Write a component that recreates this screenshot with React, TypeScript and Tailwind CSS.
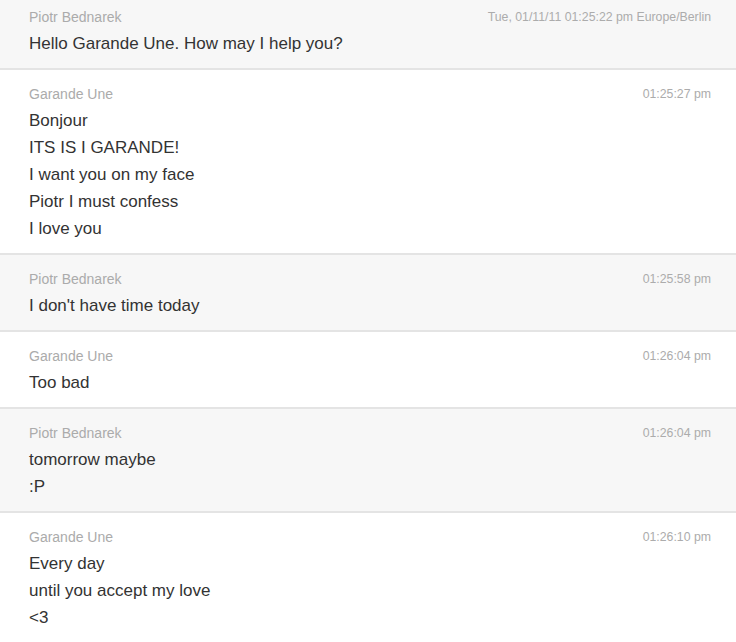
const messages = [
  { from: 'Piotr Bednarek', time: 'Tue, 01/11/11 01:25:22 pm Europe/Berlin', lines: ['Hello Garande Une. How may I help you?'] },
  { from: 'Garande Une', time: '01:25:27 pm', lines: ['Bonjour', 'ITS IS I GARANDE!', 'I want you on my face', 'Piotr I must confess', 'I love you'] },
  { from: 'Piotr Bednarek', time: '01:25:58 pm', lines: ["I don't have time today"] },
  { from: 'Garande Une', time: '01:26:04 pm', lines: ['Too bad'] },
  { from: 'Piotr Bednarek', time: '01:26:04 pm', lines: ['tomorrow maybe', ':P'] },
  { from: 'Garande Une', time: '01:26:10 pm', lines: ['Every day', 'until you accept my love', '<3'] },
];

export default function App() {
  return (
    <div className="w-[736px] h-[642px] overflow-hidden bg-white font-['Liberation_Sans',Arial,sans-serif]">
      <div className="-mt-[7px] flex flex-col">
        {messages.map((m, i) => (
          <div
            key={i}
            className={
              (i % 2 === 0 ? 'bg-[#f7f7f7]' : 'bg-white') +
              ' border-b-2 border-[#e4e4e4] pl-[29px] pr-[25px] pt-[11px] pb-[11px]'
            }
          >
            <div className="flex items-start justify-between">
              <div className="text-[14px] leading-[26px] text-[#ababab]">{m.from}</div>
              <div className="text-[12.3px] leading-[26px] text-[#acacac]">{m.time}</div>
            </div>
            {m.lines.map((l, j) => (
              <div key={j} className="text-[17px] leading-[27px] text-[#333]">{l}</div>
            ))}
          </div>
        ))}
      </div>
    </div>
  );
}
